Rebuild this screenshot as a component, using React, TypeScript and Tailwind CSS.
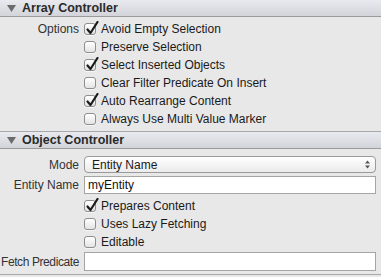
import React from 'react';

const Check: React.FC<{ checked?: boolean }> = ({ checked }) => (
  <div className="relative w-[12px] h-[12px] shrink-0 rounded-[3px] border border-[#8e8e8e] bg-gradient-to-b from-[#ffffff] to-[#e4e4e4] shadow-[0_1px_0_rgba(255,255,255,0.6)]">
    {checked && (
      <svg className="absolute left-[1px] -top-[3px]" width="13" height="14" viewBox="0 0 13 14">
        <path d="M1.5 8.5 L4.5 12 L11.5 1" fill="none" stroke="#1c1c1c" strokeWidth="2.2" strokeLinecap="round" strokeLinejoin="round" />
      </svg>
    )}
  </div>
);

const Header: React.FC<{ title: string }> = ({ title }) => (
  <div className="flex items-center h-[17px] bg-gradient-to-b from-[#e9eaef] to-[#d2d4da] border-b border-[#9a9a9a]">
    <svg className="ml-[7px] mr-[6px]" width="9" height="7" viewBox="0 0 9 7">
      <path d="M0 0 H9 L4.5 7 Z" fill="#6c6c6c" />
    </svg>
    <span className="text-[12.5px] font-bold text-[#2a2a2a] leading-none">{title}</span>
  </div>
);

const Row: React.FC<{ label?: string; checked?: boolean; text: string }> = ({ label, checked, text }) => (
  <div className="flex items-center h-[18px]">
    <div className="w-[80px] pr-[1px] text-right text-[#333]">{label}</div>
    <div className="ml-[4px]"><Check checked={checked} /></div>
    <span className="ml-[5px] text-[#1a1a1a]">{text}</span>
  </div>
);

export default function App() {
  return (
    <div className="w-[381px] h-[277px] overflow-hidden bg-[#e8e8e8] text-[12px] leading-none whitespace-nowrap" style={{ fontFamily: '"Liberation Sans", Arial, sans-serif' }}>
      <Header title="Array Controller" />
      <div className="pt-[3px] pb-[3px] border-b border-[#a8a8a8]">
        <Row label="Options" checked text="Avoid Empty Selection" />
        <Row text="Preserve Selection" />
        <Row checked text="Select Inserted Objects" />
        <Row text="Clear Filter Predicate On Insert" />
        <Row checked text="Auto Rearrange Content" />
        <Row text="Always Use Multi Value Marker" />
      </div>
      <Header title="Object Controller" />
      <div className="pt-[7px] border-b border-[#a8a8a8]">
        <div className="flex items-center h-[17px]">
          <div className="w-[80px] pr-[1px] text-right text-[#333]">Mode</div>
          <div className="ml-[4px] w-[292px] h-[17px] flex items-center justify-between rounded-[4px] border border-[#9a9a9a] bg-gradient-to-b from-[#ffffff] to-[#ebebeb] pl-[7px] pr-[5px]">
            <span className="text-[#1a1a1a]">Entity Name</span>
            <svg width="5" height="9" viewBox="0 0 5 9">
              <path d="M0 3.5 L2.5 0.5 L5 3.5 Z M0 5.5 L2.5 8.5 L5 5.5 Z" fill="#555" />
            </svg>
          </div>
        </div>
        <div className="flex items-center h-[18px] mt-[3px]">
          <div className="w-[80px] pr-[1px] text-right text-[#333]">Entity Name</div>
          <div className="ml-[4px] w-[292px] h-[18px] flex items-center border border-[#a5a5a5] bg-white pl-[3px] text-[#111]">myEntity</div>
        </div>
        <div className="mt-[3px]">
          <Row checked text="Prepares Content" />
          <Row text="Uses Lazy Fetching" />
          <Row text="Editable" />
        </div>
        <div className="flex items-center h-[19px] mt-[1px] mb-[3px]">
          <div className="w-[80px] pr-[1px] text-right text-[#333] tracking-[-0.4px]">Fetch Predicate</div>
          <div className="ml-[4px] w-[292px] h-[19px] border border-[#a5a5a5] bg-white" />
        </div>
      </div>
    </div>
  );
}
